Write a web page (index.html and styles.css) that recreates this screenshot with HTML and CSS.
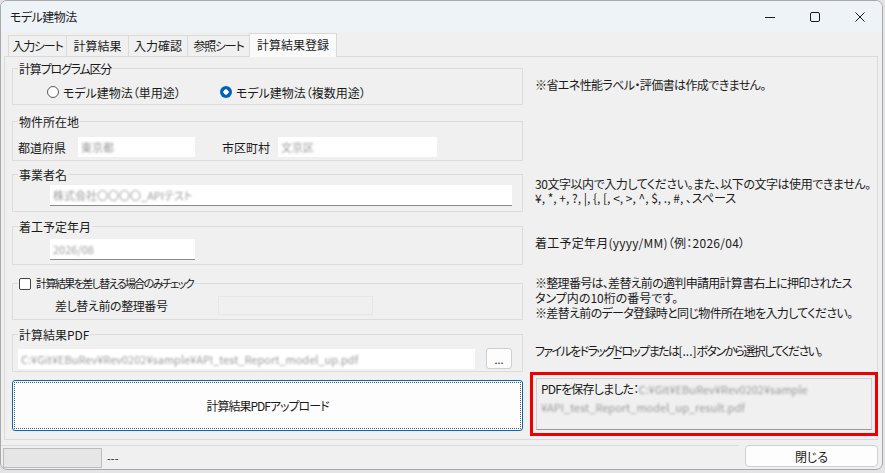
FILE: index.html
```html
<!DOCTYPE html>
<html lang="ja">
<head>
    <meta charset="UTF-8">
    <title>モデル建物法</title>
    <link rel="stylesheet" href="styles.css">
</head>
<body>
    <div class="window">
        <div class="titlebar">
            <span class="title">モデル建物法</span>
            <div class="controls">
                <span class="ctl">
                    <svg width="12" height="12" viewBox="0 0 12 12"><path d="M1 6.5h10" stroke="#1a1a1a" stroke-width="1"/></svg>
                </span>
                <span class="ctl">
                    <svg width="12" height="12" viewBox="0 0 12 12"><rect x="1.5" y="1.5" width="9" height="9" rx="1.5" fill="none" stroke="#1a1a1a" stroke-width="1"/></svg>
                </span>
                <span class="ctl">
                    <svg width="12" height="12" viewBox="0 0 12 12"><path d="M1.5 1.5l9 9M10.5 1.5l-9 9" stroke="#1a1a1a" stroke-width="1"/></svg>
                </span>
            </div>
        </div>

        <div class="tabs">
            <span class="tab tight">入力シート</span>
            <span class="tab">計算結果</span>
            <span class="tab">入力確認</span>
            <span class="tab tight">参照シート</span>
            <span class="tab active">計算結果登録</span>
        </div>

        <div class="tabpage">
            <!-- 計算プログラム区分 -->
            <fieldset class="group g1">
                <legend class="narrow">計算プログラム区分</legend>
                <div class="radio-row">
                    <label class="radio-item first"><span class="radio"></span>モデル建物法（単用途）</label>
                    <label class="radio-item"><span class="radio checked"></span>モデル建物法（複数用途）</label>
                </div>
            </fieldset>
            <div class="note single"><span class="ls-n06">※省エネ性能ラベル・評価書は作成できません。</span></div>

            <!-- 物件所在地 -->
            <fieldset class="group g2">
                <legend>物件所在地</legend>
                <div class="field-row">
                    <span class="lbl pref">都道府県</span>
                    <span class="input pref-input"><span class="blur">東京都</span></span>
                    <span class="lbl city">市区町村</span>
                    <span class="input city-input"><span class="blur">文京区</span></span>
                </div>
            </fieldset>
            <div class="note"></div>

            <!-- 事業者名 -->
            <fieldset class="group g3">
                <legend>事業者名</legend>
                <div class="field-row">
                    <span class="input underline company-input"><span class="blur">株式会社〇〇〇〇_APIテスト</span></span>
                </div>
            </fieldset>
            <div class="note double"><span class="ls-n045">30文字以内で入力してください。また、以下の文字は使用できません。</span><br>¥, *, +, ?, |, {, [, &lt;, &gt;, ^, $, ., #, 、スペース</div>

            <!-- 着工予定年月 -->
            <fieldset class="group g4">
                <legend>着工予定年月</legend>
                <div class="field-row">
                    <span class="input underline date-input"><span class="blur">2026/08</span></span>
                </div>
            </fieldset>
            <div class="note single"><span class="ls-p03">着工予定年月(yyyy/MM)（例：2026/04）</span></div>

            <!-- 差し替え -->
            <fieldset class="group g5">
                <legend class="check-legend"><span class="checkbox"></span><span class="check-text">計算結果を差し替える場合のみチェック</span></legend>
                <div class="field-row">
                    <span class="lbl seiri">差し替え前の整理番号</span>
                    <span class="input disabled seiri-input"></span>
                </div>
            </fieldset>
            <div class="note triple"><span class="ls-n07">※整理番号は、差替え前の適判申請用計算書右上に押印されたス</span><br>タンプ内の10桁の番号です。<br><span class="ls-n065">※差替え前のデータ登録時と同じ物件所在地を入力してください。</span></div>

            <!-- 計算結果PDF -->
            <fieldset class="group g6">
                <legend>計算結果PDF</legend>
                <div class="field-row">
                    <span class="input pdf-input"><span class="blur">C:¥Git¥EBuRev¥Rev0202¥sample¥API_test_Report_model_up.pdf</span></span>
                    <button class="browse-btn">...</button>
                </div>
            </fieldset>
            <div class="note single"><span class="ls-n16">ファイルをドラッグ<u>ド</u>ロップまたは<span class="plain">[...]</span>ボタンから選択してください。</span></div>

            <button class="upload-btn">計算結果PDFアップロード</button>
            <div class="result-box"><span class="ls-n08">PDFを保存しました：</span><span class="blur">C:¥Git¥EBuRev¥Rev0202¥sample</span><br><span class="blur">¥API_test_Report_model_up_result.pdf</span></div>
        </div>

        <div class="statusbar">
            <div class="status-left">
                <div class="progress"></div>
                <span class="status-text">---</span>
            </div>
            <button class="close-btn">閉じる</button>
        </div>
    </div>
</body>
</html>
```

FILE: styles.css
```css
* {
    margin: 0;
    padding: 0;
    box-sizing: border-box;
}

body {
    font-family: "Noto Sans CJK JP", "Noto Sans", sans-serif;
    font-feature-settings: "palt";
    font-size: 12px;
    color: #1a1a1a;
    background: #e4e4e6;
    width: 885px;
    height: 473px;
    overflow: hidden;
}

.window {
    width: 883px;
    height: 470px;
    background: #f0f0f0;
    border: 1px solid #a8a8a8;
    border-radius: 7px;
    overflow: hidden;
    display: flex;
    flex-direction: column;
}

/* title bar */
.titlebar {
    height: 31px;
    background: #eef3f8;
    display: flex;
    align-items: center;
    justify-content: space-between;
    padding-left: 9px;
}

.title {
    font-size: 12px;
    line-height: 16px;
    letter-spacing: -0.5px;
}

.controls {
    display: flex;
    height: 100%;
}

.ctl {
    width: 45px;
    height: 100%;
    display: flex;
    align-items: center;
    justify-content: center;
}

/* tabs */
.tabs {
    margin-top: 1px;
    height: 23px;
    display: flex;
    align-items: flex-end;
    padding-left: 7px;
}

.tab {
    height: 21px;
    line-height: 20px;
    border: 1px solid #dadada;
    border-bottom: none;
    margin-right: -1px;
    background: #f0f0f0;
    white-space: nowrap;
    text-align: center;
}

.tab.tight { letter-spacing: -1.2px; }

.tab:nth-child(1) { width: 59px; }
.tab:nth-child(2) { width: 63px; }
.tab:nth-child(3) { width: 60px; }
.tab:nth-child(4) { width: 63px; }

.tab.active {
    height: 24px;
    width: 88px;
    line-height: 22px;
    margin-bottom: -1px;
    background: #fafafa;
    position: relative;
    z-index: 1;
}

/* tab page */
.tabpage {
    height: 384px;
    margin: 0 4px 0 3px;
    border: 1px solid #dadada;
    background: #f0f0f0;
    padding: 3px 5px 0 7px;
    display: grid;
    grid-template-columns: 511px 337px;
    grid-template-rows: 53px 53px 52px 57px 51px 52px 53px;
    column-gap: 12px;
    align-items: start;
}

.group {
    border: 1px solid #dcdcdc;
    padding: 0 5px;
    min-width: 0;
}

.group legend {
    padding: 0 1px;
    line-height: 17px;
    display: flex;
    align-items: center;
}

.group legend.narrow { letter-spacing: -1.2px; }

.g1 { height: 45px; }
.g2 { height: 48px; }
.g3 { height: 46px; }
.g4 { height: 47px; }
.g5 { height: 45px; }
.g6 { height: 46px; }

.field-row {
    display: flex;
    align-items: center;
}

.g2 .field-row { margin-top: 7px; }
.g3 .field-row { margin-top: 2px; }
.g4 .field-row { margin-top: 4px; }
.g5 .field-row { margin-top: 4px; }
.g6 .field-row { margin-top: 5px; }

/* radios */
.radio-row {
    display: flex;
    align-items: center;
    margin-top: 6px;
    height: 18px;
}

.radio-item {
    display: flex;
    align-items: center;
    gap: 4px;
}

.radio-item.first {
    margin-left: 29px;
    width: 173px;
}

.radio {
    width: 12px;
    height: 12px;
    border: 1px solid #5a5a5a;
    border-radius: 50%;
    background: #fff;
}

.radio.checked {
    border: none;
    background: radial-gradient(circle, #fff 0 2.4px, #0063b8 2.9px);
}

.checkbox {
    width: 12px;
    height: 12px;
    border: 1px solid #444;
    border-radius: 2px;
    background: #fff;
    margin-right: 5px;
}

.check-text {
    font-size: 11px;
    letter-spacing: -1.6px;
}

/* labels and inputs */
.lbl {
    white-space: nowrap;
}

.lbl.pref { width: 60px; }
.lbl.city { width: 56px; margin-left: 27px; }
.lbl.seiri { width: 163px; margin-left: 37px; letter-spacing: -0.4px; }

.input {
    display: flex;
    align-items: center;
    height: 20px;
    background: #fff;
    padding-left: 3px;
    overflow: hidden;
    white-space: nowrap;
}

.input.underline {
    height: 21px;
    border-bottom: 1px solid #8a8a8a;
}

.pref-input { width: 117px; }
.city-input { width: 159px; }
.company-input { width: 462px; margin-left: 32px; }
.date-input { width: 145px; margin-left: 32px; }
.pdf-input { width: 457px; height: 20px; }

.input.disabled {
    width: 155px;
    height: 19px;
    background: #f0f0f0;
    border: 1px solid #e6e6e6;
}

.blur {
    color: #9a9a9a;
    font-size: 11px;
    filter: blur(1.3px);
}

.browse-btn {
    width: 26px;
    height: 21px;
    margin-left: 11px;
    border: 1px solid #cfcfcf;
    border-radius: 3px;
    background: #fdfdfd;
    font-family: inherit;
    font-size: 11px;
    line-height: 12px;
    color: #1a1a1a;
}

/* notes on the right */
.note {
    line-height: 15px;
    white-space: nowrap;
}

.note.single { padding-top: 17px; }
.note.double { padding-top: 11px; line-height: 14px; }
.note.triple { padding-top: 0; }

.note u {
    text-underline-offset: 2px;
}

.note .plain { letter-spacing: 0; }

.ls-n045 { letter-spacing: -0.45px; }
.ls-n06 { letter-spacing: -0.6px; }
.ls-n065 { letter-spacing: -0.65px; }
.ls-n07 { letter-spacing: -0.7px; }
.ls-n08 { letter-spacing: -0.8px; }
.ls-n16 { letter-spacing: -1.6px; }
.ls-p03 { letter-spacing: 0.25px; }

/* upload row */
.upload-btn {
    margin-top: 2px;
    height: 51px;
    width: 511px;
    border: 1px solid #0067c0;
    border-radius: 3px;
    background: #fdfdfd;
    outline: 1px dotted #555;
    outline-offset: -3px;
    font-family: inherit;
    font-feature-settings: "palt";
    font-size: 12px;
    letter-spacing: -1px;
    color: #1a1a1a;
}

.result-box {
    margin-left: 1px;
    width: 336px;
    height: 52px;
    border: 1px solid #d0d0d0;
    border-bottom-color: #9a9a9a;
    background: #f0f0f0;
    padding: 1px 4px;
    line-height: 18px;
    white-space: nowrap;
    outline: 3px solid #ee0000;
    outline-offset: 3px;
}

/* status bar */
.statusbar {
    height: 28px;
    display: flex;
    align-items: flex-start;
}

.status-left {
    flex: 1;
    margin-top: 5px;
    padding: 2px 0 0 2px;
    border-top: 1px solid #dcdcdc;
    display: flex;
    align-items: center;
    gap: 5px;
}

.progress {
    width: 99px;
    height: 20px;
    background: #e6e6e6;
    border: 1px solid #bcbcbc;
}

.status-text {
    font-size: 11px;
}

.close-btn {
    margin: 5px 4px 0 6px;
    width: 133px;
    height: 22px;
    border: 1px solid #d0d0d0;
    border-radius: 4px;
    background: #fdfdfd;
    font-family: inherit;
    font-feature-settings: "palt";
    font-size: 12px;
    color: #1a1a1a;
}
```
